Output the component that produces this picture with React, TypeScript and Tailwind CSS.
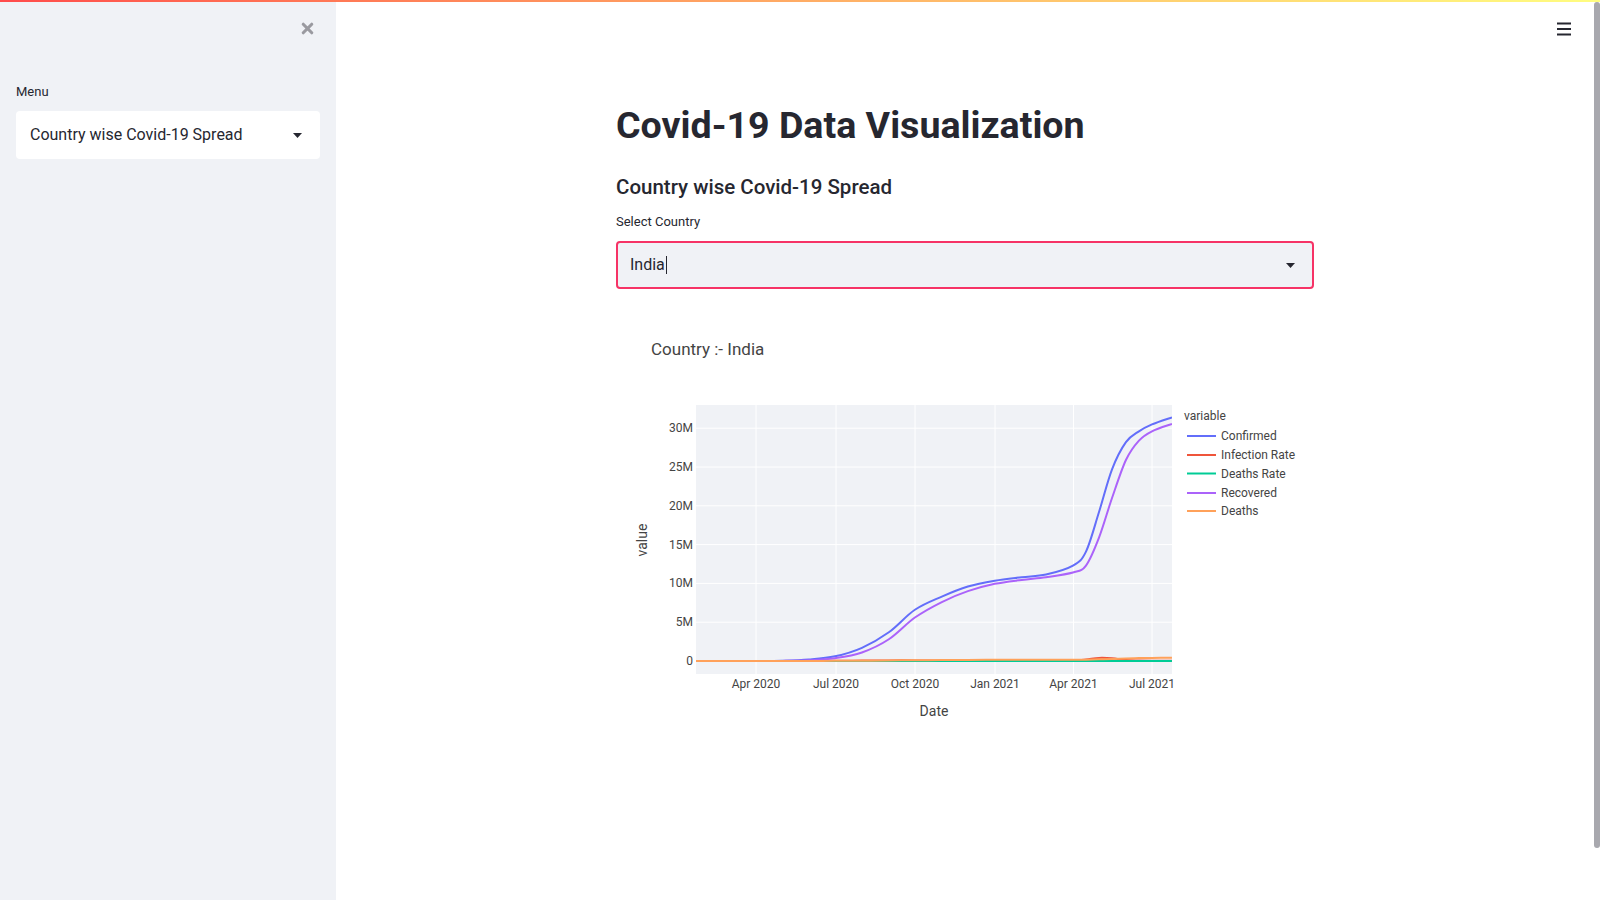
import { X } from "lucide-react"

type Pt = [number, number]

// days since 22 Jan 2020, values in millions
const days = [0, 39, 70, 100, 131, 161, 192, 223, 253, 284, 314, 345, 376, 404, 435, 450, 465, 480, 496, 511, 526, 549]
const confirmed = [0, 0, 0.002, 0.035, 0.19, 0.6, 1.7, 3.7, 6.6, 8.3, 9.6, 10.35, 10.8, 11.15, 12.3, 14.1, 19.2, 24.7, 28.2, 29.6, 30.5, 31.4]
const recovered = [0, 0, 0.0002, 0.01, 0.09, 0.36, 1.1, 2.8, 5.6, 7.6, 9.0, 9.95, 10.45, 10.8, 11.4, 12.3, 15.9, 21.0, 25.9, 28.4, 29.6, 30.55]
const deaths = [0, 0, 0, 0.001, 0.005, 0.017, 0.036, 0.065, 0.1, 0.122, 0.138, 0.149, 0.155, 0.157, 0.163, 0.173, 0.212, 0.27, 0.33, 0.38, 0.4, 0.42]
const infection = [0, 0, 0, 0.002, 0.008, 0.02, 0.055, 0.08, 0.08, 0.045, 0.03, 0.018, 0.012, 0.016, 0.08, 0.2, 0.4, 0.35, 0.13, 0.07, 0.045, 0.035]
const deathsRate = days.map(() => 0.003)

const xs = (t: number) => 79.2 + t * 0.8684
const ys = (v: number) => 341 - v * 7.76

function smooth(values: number[]) {
  const pts: Pt[] = days.map((t, i) => [xs(t), ys(values[i])])
  let d = `M${pts[0][0]},${pts[0][1]}`
  for (let i = 0; i < pts.length - 1; i++) {
    const p0 = pts[i - 1] ?? pts[i]
    const p1 = pts[i]
    const p2 = pts[i + 1]
    const p3 = pts[i + 2] ?? p2
    const c1 = [p1[0] + (p2[0] - p0[0]) / 6, p1[1] + (p2[1] - p0[1]) / 6]
    const c2 = [p2[0] - (p3[0] - p1[0]) / 6, p2[1] - (p3[1] - p1[1]) / 6]
    d += ` C${c1[0]},${c1[1]} ${c2[0]},${c2[1]} ${p2[0]},${p2[1]}`
  }
  return d
}

const series = [
  { name: "Confirmed", color: "#636efa", data: confirmed },
  { name: "Infection Rate", color: "#ef553b", data: infection },
  { name: "Deaths Rate", color: "#00cc96", data: deathsRate },
  { name: "Recovered", color: "#ab63fa", data: recovered },
  { name: "Deaths", color: "#ffa15a", data: deaths },
]

const xTicks = [
  { x: 140, label: "Apr 2020" },
  { x: 220, label: "Jul 2020" },
  { x: 299, label: "Oct 2020" },
  { x: 379, label: "Jan 2021" },
  { x: 457.5, label: "Apr 2021" },
  { x: 536, label: "Jul 2021" },
]
const yTicks = [0, 5, 10, 15, 20, 25, 30]
const legendY = [116, 135, 153.5, 173, 191]

function CaretDown() {
  return (
    <svg width="9" height="5" viewBox="0 0 9 5" className="shrink-0">
      <path d="M0 0h9L4.5 5z" fill="#262730" />
    </svg>
  )
}

function Chart() {
  return (
    <svg width="698" height="410" viewBox="0 0 698 410" className="mt-[31px] block font-['Roboto',sans-serif]">
      <defs>
        <clipPath id="plot">
          <rect x="80" y="85" width="476" height="269" />
        </clipPath>
      </defs>
      <text x="35" y="35" fontSize="17" fill="#444">Country :- India</text>

      <rect x="80" y="85" width="476" height="269" fill="#f0f2f6" />
      {yTicks.slice(1).map((v) => (
        <line key={v} x1="80" x2="556" y1={ys(v)} y2={ys(v)} stroke="#fff" strokeWidth="1" />
      ))}
      {xTicks.map((t) => (
        <line key={t.label} x1={t.x} x2={t.x} y1="85" y2="354" stroke="#fff" strokeWidth="1" />
      ))}
      <line x1="80" x2="556" y1={ys(0)} y2={ys(0)} stroke="#fff" strokeWidth="2" />

      <g clipPath="url(#plot)">
        {series.map((s) => (
          <path key={s.name} d={smooth(s.data)} fill="none" stroke={s.color} strokeWidth="2" strokeLinejoin="round" />
        ))}
      </g>

      {yTicks.map((v) => (
        <text key={v} x="77" y={ys(v) + 4} fontSize="12" fill="#444" textAnchor="end">
          {v === 0 ? "0" : `${v}M`}
        </text>
      ))}
      {xTicks.map((t) => (
        <text key={t.label} x={t.x} y="368" fontSize="12" fill="#444" textAnchor="middle">
          {t.label}
        </text>
      ))}
      <text x="318" y="396" fontSize="14" fill="#444" textAnchor="middle">Date</text>
      <text x="0" y="0" fontSize="14" fill="#444" textAnchor="middle" transform="translate(31 220) rotate(-90)">value</text>

      <text x="568" y="100" fontSize="12" fill="#444">variable</text>
      {series.map((s, i) => (
        <g key={s.name}>
          <line x1="571" x2="600" y1={legendY[i]} y2={legendY[i]} stroke={s.color} strokeWidth="2" />
          <text x="605" y={legendY[i] + 4} fontSize="12" fill="#444">{s.name}</text>
        </g>
      ))}
    </svg>
  )
}

function Sidebar() {
  return (
    <aside className="flex w-[336px] shrink-0 flex-col bg-[#f0f2f6] px-4">
      <div className="flex h-[35px] items-end justify-end pr-[4px]">
        <X size={17} strokeWidth={4.4} className="text-[#9a9aa0]" />
      </div>
      <label className="mt-[47px] text-[13px] leading-4">Menu</label>
      <div className="mt-[11px] flex h-[48px] items-center justify-between rounded-[4px] bg-white pl-[14px] pr-[18px]">
        <span className="text-base">Country wise Covid-19 Spread</span>
        <CaretDown />
      </div>
    </aside>
  )
}

export default function App() {
  return (
    <div className="flex h-screen w-full flex-col overflow-hidden bg-white font-['Roboto',sans-serif] text-[#262730]">
      <div className="h-[2px] w-full shrink-0 bg-linear-to-r from-[#ff4b4b] to-[#fffd80]" />
      <div className="flex min-h-0 flex-1">
        <Sidebar />
        <main className="flex min-w-0 flex-1">
          <div className="flex flex-1 flex-col">
            <header className="flex h-[56px] shrink-0 justify-end pr-[23px] pt-[20px]">
              <svg width="14" height="14" viewBox="0 0 14 14">
                <rect x="0" y="0.5" width="14" height="2" fill="#262730" />
                <rect x="0" y="6" width="14" height="2" fill="#262730" />
                <rect x="0" y="11.5" width="14" height="2" fill="#262730" />
              </svg>
            </header>
            <div className="mx-auto flex w-[698px] flex-col">
              <h1 className="mt-[46px] text-[37.6px] font-bold leading-[43px]">Covid-19 Data Visualization</h1>
              <h3 className="mt-[28px] text-[20.5px] font-medium leading-6">Country wise Covid-19 Spread</h3>
              <label className="mt-[15px] text-[13px] leading-4">Select Country</label>
              <div className="mt-[11px] flex h-[48px] items-center justify-between rounded-[4px] border-2 border-[#f63366] bg-[#f0f2f6] pl-3 pr-[17px]">
                <span className="flex items-center text-base">
                  India
                  <span className="ml-px inline-block h-[18px] w-px bg-[#262730]" />
                </span>
                <CaretDown />
              </div>
              <Chart />
            </div>
          </div>
          <div className="w-[6px] shrink-0 bg-white">
            <div className="h-[846px] rounded-[3px] bg-[#a8a8ae]" />
          </div>
        </main>
      </div>
    </div>
  )
}
